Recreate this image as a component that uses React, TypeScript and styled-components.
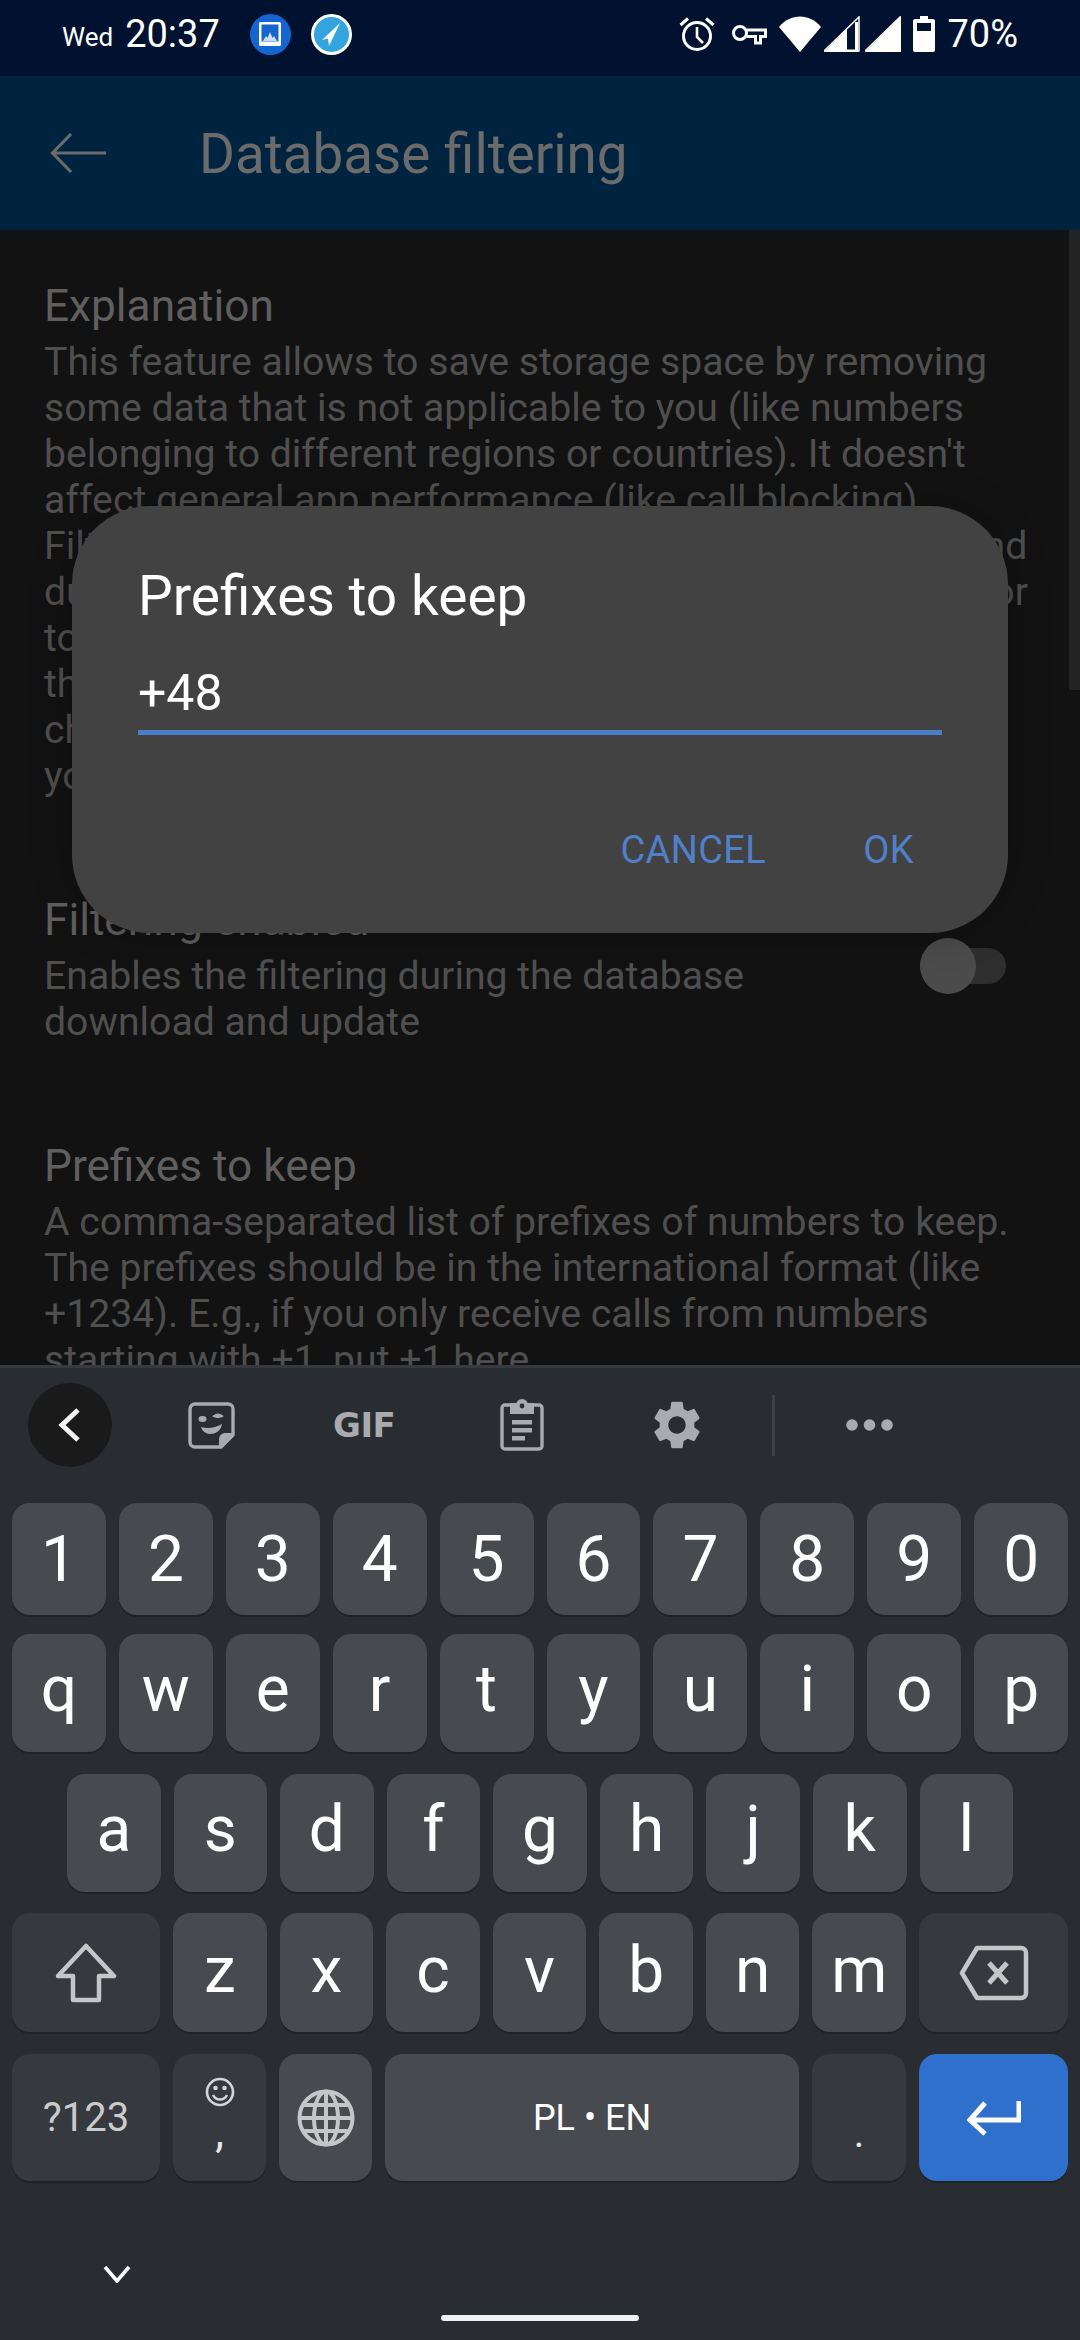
import React from "react";
import styled, { createGlobalStyle } from "styled-components";

const Global = createGlobalStyle`
  html, body { margin: 0; padding: 0; background: #121212; }
  * { box-sizing: border-box; }
`;

const Page = styled.div`
  position: relative;
  width: 1080px;
  height: 2340px;
  overflow: hidden;
  display: flex;
  flex-direction: column;
  font-family: Roboto, "Liberation Sans", sans-serif;
  background: #121212;
`;

const StatusBar = styled.div`
  height: 76px;
  flex: none;
  background: #001230;
  color: #fff;
  display: flex;
  align-items: center;
  padding: 0 62px 8px;
`;
const Day = styled.span`
  font-size: 26px;
  margin-top: 6px;
  margin-right: 12px;
`;
const Clock = styled.span`
  font-size: 38px;
  margin-right: 30px;
`;
const NoteCircle = styled.div<{ $bg: string; $ring?: boolean }>`
  width: 41px;
  height: 41px;
  border-radius: 50%;
  margin-right: 20px;
  background: ${(p) => p.$bg};
  border: ${(p) => (p.$ring ? "3px solid #fff" : "none")};
  display: flex;
  align-items: center;
  justify-content: center;
`;
const StatusRight = styled.div`
  margin-left: auto;
  display: flex;
  align-items: center;
`;
const Spacer = styled.span<{ $w: number }>`
  width: ${(p) => p.$w}px;
  flex: none;
`;
const Percent = styled.span`
  font-size: 38px;
  margin-left: 12px;
`;

const AppBar = styled.div`
  height: 154px;
  flex: none;
  background: #002440;
  display: flex;
  align-items: center;
  padding-left: 50px;
`;
const AppTitle = styled.div`
  margin-left: 93px;
  margin-top: 2px;
  font-size: 54.8px;
  color: #6b6b6b;
`;

const Content = styled.div`
  flex: 1;
  min-height: 0;
  overflow: hidden;
  padding: 48px 0 0 44px;
  background: #121212;
`;
const SectionRow = styled.div`
  display: flex;
  align-items: center;
  justify-content: space-between;
  padding-right: 74px;
  margin-top: 93px;
`;
const Title = styled.div<{ $gap?: number }>`
  font-size: 44.2px;
  line-height: 56px;
  color: #5f5f5f;
  white-space: nowrap;
  margin-top: ${(p) => p.$gap ?? 0}px;
`;
const Body = styled.div`
  font-size: 39.2px;
  line-height: 46px;
  color: #4f4f4f;
  margin-top: 5px;
  white-space: pre;
`;
const Track = styled.div`
  position: relative;
  width: 86px;
  height: 36px;
  border-radius: 18px;
  background: #2e2e2e;
  margin-top: -6px;
`;
const Thumb = styled.div`
  position: absolute;
  left: 0;
  top: -10px;
  width: 56px;
  height: 56px;
  border-radius: 50%;
  background: #4b4b4b;
`;
const ScrollThumb = styled.div`
  position: absolute;
  top: 230px;
  right: 0;
  width: 11px;
  height: 460px;
  background: #232323;
`;

const Dialog = styled.div`
  position: absolute;
  left: 72px;
  top: 506px;
  width: 936px;
  height: 427px;
  border-radius: 78px;
  background: #424242;
  padding: 58px 66px 0;
  display: flex;
  flex-direction: column;
  box-shadow: 0 0 40px rgba(0, 0, 0, 0.25);
`;
const DialogTitle = styled.div`
  font-size: 55px;
  line-height: 64px;
  color: #fff;
`;
const DialogInput = styled.div`
  margin-top: 34px;
  height: 73px;
  font-size: 50px;
  line-height: 62px;
  color: #fff;
  border-bottom: 5px solid #4a7ec9;
`;
const DialogActions = styled.div`
  display: flex;
  justify-content: flex-end;
  gap: 97px;
  margin-top: 92px;
  padding-right: 28px;
`;
const DialogAction = styled.div`
  font-size: 38px;
  line-height: 46px;
  letter-spacing: 0.4px;
  color: #4f80c9;
`;

const Keyboard = styled.div`
  height: 975px;
  flex: none;
  background: #292d32;
  border-top: 3px solid #363a3f;
  display: flex;
  flex-direction: column;
`;
const Toolbar = styled.div`
  height: 135px;
  flex: none;
  display: flex;
  align-items: center;
  padding: 0 0 21px 28px;
`;
const BackCircle = styled.div`
  width: 84px;
  height: 84px;
  border-radius: 50%;
  background: #1a1a1b;
  display: flex;
  align-items: center;
  justify-content: center;
  margin-right: 76px;
`;
const ToolSlot = styled.div<{ $w: number }>`
  width: ${(p) => p.$w}px;
  flex: none;
  display: flex;
  align-items: center;
`;
const GifLabel = styled.span`
  font-family: "DejaVu Sans", sans-serif;
  font-weight: 700;
  font-size: 34px;
  line-height: 40px;
  color: #a9abae;
  letter-spacing: -0.5px;
`;
const ToolDivider = styled.div`
  width: 3px;
  height: 61px;
  background: #3d4146;
  margin-right: 71px;
`;
const Keys = styled.div`
  display: flex;
  flex-direction: column;
  padding: 0 12px;
`;
const KeyRow = styled.div<{ $h: number; $top: number; $inset?: number }>`
  height: ${(p) => p.$h}px;
  margin-top: ${(p) => p.$top}px;
  padding: 0 ${(p) => p.$inset ?? 0}px;
  display: flex;
  gap: 13px;
`;
const Key = styled.div<{ $kind?: "dark" | "accent"; $grow?: number; $w?: number; $lift?: number }>`
  flex: ${(p) => (p.$w ? `0 0 ${p.$w}px` : `${p.$grow ?? 1} 1 0`)};
  min-width: 0;
  border-radius: 18px;
  background: ${(p) => (p.$kind === "dark" ? "#36393e" : p.$kind === "accent" ? "#2f70cc" : "#474b4f")};
  box-shadow: 0 2px 0 #1f2226;
  color: #fff;
  font-size: 64px;
  padding-bottom: ${(p) => p.$lift ?? 0}px;
  display: flex;
  align-items: center;
  justify-content: center;
`;
const SmallLabel = styled.span<{ $color?: string; $size: number }>`
  font-size: ${(p) => p.$size}px;
  color: ${(p) => p.$color ?? "#fff"};
`;
const StackKey = styled(Key)`
  flex-direction: column;
  justify-content: flex-start;
  padding-top: 23px;
  font-size: 40px;
  line-height: 40px;
`;
const Comma = styled.span`
  margin-top: 5px;
  color: #e8e8e8;
  font-size: 44px;
`;
const Period = styled(Key)`
  font-size: 40px;
  align-items: flex-end;
  padding-bottom: 24px;
  color: #e8e8e8;
`;
const NavArea = styled.div`
  flex: 1;
  display: flex;
  flex-direction: column;
`;
const ChevronSlot = styled.div`
  margin: 84px 0 0 103px;
  width: 28px;
  height: 18px;
  display: flex;
`;
const HomeBar = styled.div`
  width: 198px;
  height: 6px;
  border-radius: 3px;
  background: #f0f0f0;
  align-self: center;
  margin-top: 32px;
`;

const Alarm = () => (
  <svg width="36" height="36" viewBox="0 0 36 36" fill="none" stroke="#fff" strokeWidth="3">
    <circle cx="18" cy="20" r="13.5" />
    <path d="M18 11v10l6 6" strokeWidth="2.6" />
    <path d="M1.5 9 9 2.5M34.5 9 27 2.5" />
  </svg>
);
const KeyIcon = () => (
  <svg width="36" height="24" viewBox="0 0 36 24" fill="none" stroke="#fff" strokeWidth="3">
    <circle cx="9" cy="11" r="6.5" />
    <path d="M15.5 8H34.5V14.5H29.5V21H24.5V14.5H15.5" />
  </svg>
);
const Wifi = () => (
  <svg width="42" height="36" viewBox="0 0 42 36" fill="#fff">
    <path d="M0 11C11-3 31-3 42 11L21 36Z" />
  </svg>
);
const Signal = ({ full }: { full?: boolean }) => (
  <svg width="36" height="36" viewBox="0 0 36 36">
    <path d="M0 35 35 1V35Z" fill="none" stroke="#fff" strokeWidth="1.5" />
    <path d={full ? "M0 36 36 0V36Z" : "M0 36 23 13V36Z"} fill="#fff" />
    {!full && <path d="M32.5 6V35H23" fill="none" stroke="#fff" strokeWidth="3" />}
  </svg>
);
const Battery = () => (
  <svg width="22" height="36" viewBox="0 0 22 36" fill="#fff">
    <path d="M7 0h8v3h5a2 2 0 0 1 2 2v29a2 2 0 0 1-2 2H2a2 2 0 0 1-2-2V5a2 2 0 0 1 2-2h5Z" />
    <rect x="4" y="7" width="14" height="8" fill="#001230" />
  </svg>
);
const Gallery = () => (
  <svg width="24" height="26" viewBox="0 0 24 26">
    <rect x="1" y="1" width="22" height="24" rx="1.5" fill="#fff" />
    <rect x="3.5" y="3.5" width="17" height="17" fill="#1565d0" />
    <path d="M5 20l3-5 1.5 2L12 11l2.5 6 1.5-2 3 5Z" fill="#cfe0f6" />
  </svg>
);
const Plane = () => (
  <svg width="28" height="28" viewBox="0 0 28 28" fill="#fff">
    <path d="M23 3 5 20l6-1.5L12 26 23 3Z" />
  </svg>
);
const AppBack = () => (
  <svg width="56" height="42" viewBox="0 0 56 42" fill="none" stroke="#6b6b6b" strokeWidth="3.2">
    <path d="M56 21H3M21 2 2.5 21 21 40" />
  </svg>
);
const ToolChevron = () => (
  <svg width="24" height="34" viewBox="0 0 24 34" fill="none" stroke="#f2f2f2" strokeWidth="5">
    <path d="M20 2 4 17l16 15" />
  </svg>
);
const Sticker = () => (
  <svg width="47" height="47" viewBox="0 0 47 47" fill="none">
    <path
      d="M7 2h33a5 5 0 0 1 5 5v26L33 45H7a5 5 0 0 1-5-5V7a5 5 0 0 1 5-5Z"
      stroke="#a9abae"
      strokeWidth="3.4"
      strokeLinejoin="round"
    />
    <path d="M45 31H37a6 6 0 0 0-6 6v8Z" fill="#a9abae" />
    <ellipse cx="14.5" cy="17" rx="4" ry="3" fill="#a9abae" />
    <path d="M26 14q4-3 8 0q-4 2-8 0Z" fill="#a9abae" stroke="#a9abae" strokeWidth="2" />
    <path d="M13 25c7 2 14 1 21-3-1 7-7 10-12 10-4 0-8-3-9-7Z" fill="#a9abae" />
  </svg>
);
const Clipboard = () => (
  <svg width="44" height="52" viewBox="0 0 44 52" fill="none">
    <rect x="2" y="6" width="40" height="44" rx="3" stroke="#a9abae" strokeWidth="3.4" />
    <path d="M10 4h24v11H10Z" fill="#a9abae" />
    <circle cx="22" cy="6" r="6" fill="#a9abae" />
    <circle cx="22" cy="7" r="2.4" fill="#292d32" />
    <rect x="12" y="21" width="20" height="4.5" fill="#a9abae" />
    <rect x="12" y="29" width="20" height="4.5" fill="#a9abae" />
    <rect x="12" y="37" width="13" height="4.5" fill="#a9abae" />
  </svg>
);
const Gear = () => (
  <svg width="58" height="58" viewBox="0 0 24 24" fill="#a9abae">
    <path d="M19.14 12.94c.04-.3.06-.61.06-.94 0-.32-.02-.64-.07-.94l2.03-1.58c.18-.14.23-.41.12-.61l-1.92-3.32c-.12-.22-.37-.29-.59-.22l-2.39.96c-.5-.38-1.03-.7-1.62-.94l-.36-2.54c-.04-.24-.24-.41-.48-.41h-3.84c-.24 0-.43.17-.47.41l-.36 2.54c-.59.24-1.13.57-1.62.94l-2.39-.96c-.22-.08-.47 0-.59.22L2.74 8.87c-.12.21-.08.47.12.61l2.03 1.58c-.05.3-.09.63-.09.94s.02.64.07.94l-2.03 1.58c-.18.14-.23.41-.12.61l1.92 3.32c.12.22.37.29.59.22l2.39-.96c.5.38 1.03.7 1.62.94l.36 2.54c.05.24.24.41.48.41h3.84c.24 0 .44-.17.47-.41l.36-2.54c.59-.24 1.13-.56 1.62-.94l2.39.96c.22.08.47 0 .59-.22l1.92-3.32c.12-.22.07-.47-.12-.61l-2.01-1.58zM12 15.6c-1.98 0-3.6-1.62-3.6-3.6s1.62-3.6 3.6-3.6 3.6 1.62 3.6 3.6-1.62 3.6-3.6 3.6z" />
  </svg>
);
const Dots = () => (
  <svg width="47" height="12" viewBox="0 0 47 12" fill="#a9abae">
    <circle cx="6" cy="6" r="5.8" />
    <circle cx="23.5" cy="6" r="5.8" />
    <circle cx="41" cy="6" r="5.8" />
  </svg>
);
const Shift = () => (
  <svg width="62" height="60" viewBox="0 0 62 60" fill="none" stroke="#c4c6c8" strokeWidth="4.5" strokeLinejoin="round">
    <path d="M31 3 59 33H44V57H18V33H3Z" />
  </svg>
);
const Backspace = () => (
  <svg width="70" height="56" viewBox="0 0 70 56" fill="none" stroke="#c4c6c8" strokeWidth="4.5" strokeLinejoin="round">
    <path d="M18 3H62a5 5 0 0 1 5 5V48a5 5 0 0 1-5 5H18L3 28Z" />
    <path d="M30 18 48 38M48 18 30 38" strokeWidth="5" />
  </svg>
);
const Smiley = () => (
  <svg width="30" height="30" viewBox="0 0 30 30" fill="none" stroke="#d4d5d7" strokeWidth="2.6">
    <circle cx="15" cy="15" r="13" />
    <path d="M8 18c3 6 11 6 14 0" />
    <circle cx="10.5" cy="11" r="1" fill="#d4d5d7" />
    <circle cx="19.5" cy="11" r="1" fill="#d4d5d7" />
  </svg>
);
const Globe = () => (
  <svg width="58" height="58" viewBox="0 0 58 58" fill="none" stroke="#c4c6c8" strokeWidth="4">
    <circle cx="29" cy="29" r="26.5" />
    <ellipse cx="29" cy="29" rx="12" ry="26.5" />
    <path d="M29 2.5V55.5M6 16H52M3 29H55M6 42H52" />
  </svg>
);
const Enter = () => (
  <svg width="54" height="36" viewBox="0 0 54 36" fill="none" stroke="#fff" strokeWidth="5">
    <path d="M52 1V20H4M18 3 3 20 18 34" />
  </svg>
);
const Chevron = () => (
  <svg width="28" height="18" viewBox="0 0 28 18" fill="none" stroke="#fff" strokeWidth="3.6">
    <path d="M2 2 14 16 26 2" />
  </svg>
);

const App = () => (
  <Page>
    <Global />
    <StatusBar>
      <Day>Wed</Day>
      <Clock>20:37</Clock>
      <NoteCircle $bg="#1565d0">
        <Gallery />
      </NoteCircle>
      <NoteCircle $bg="#34a4de" $ring>
        <Plane />
      </NoteCircle>
      <StatusRight>
        <Alarm />
        <Spacer $w={16} />
        <KeyIcon />
        <Spacer $w={12} />
        <Wifi />
        <Spacer $w={3} />
        <Signal />
        <Spacer $w={5} />
        <Signal full />
        <Spacer $w={12} />
        <Battery />
        <Percent>70%</Percent>
      </StatusRight>
    </StatusBar>
    <AppBar>
      <AppBack />
      <AppTitle>Database filtering</AppTitle>
    </AppBar>
    <Content>
      <Title>Explanation</Title>
      <Body>
        {`This feature allows to save storage space by removing
some data that is not applicable to you (like numbers
belonging to different regions or countries). It doesn't
affect general app performance (like call blocking).
Filtering is applied to the database when it is loaded, and
during every update. You may clear the data, and wait for
to have the filter applied to what is stored already,
then update the database from the main settings
choose the prefixes carefully, otherwise
you may lose some of the data`}
      </Body>
      <SectionRow>
        <div>
          <Title>Filtering enabled</Title>
          <Body>
            {`Enables the filtering during the database
download and update`}
          </Body>
        </div>
        <Track>
          <Thumb />
        </Track>
      </SectionRow>
      <Title $gap={93}>Prefixes to keep</Title>
      <Body>
        {`A comma-separated list of prefixes of numbers to keep.
The prefixes should be in the international format (like
+1234). E.g., if you only receive calls from numbers
starting with +1, put +1 here.`}
      </Body>
    </Content>
    <ScrollThumb />
    <Dialog>
      <DialogTitle>Prefixes to keep</DialogTitle>
      <DialogInput>+48</DialogInput>
      <DialogActions>
        <DialogAction>CANCEL</DialogAction>
        <DialogAction>OK</DialogAction>
      </DialogActions>
    </Dialog>
    <Keyboard>
      <Toolbar>
        <BackCircle>
          <ToolChevron />
        </BackCircle>
        <ToolSlot $w={145}>
          <Sticker />
        </ToolSlot>
        <ToolSlot $w={167}>
          <GifLabel>GIF</GifLabel>
        </ToolSlot>
        <ToolSlot $w={148}>
          <Clipboard />
        </ToolSlot>
        <ToolSlot $w={124}>
          <Gear />
        </ToolSlot>
        <ToolDivider />
        <Dots />
      </Toolbar>
      <Keys>
        <KeyRow $h={112} $top={0}>
          {"1234567890".split("").map((k) => (
            <Key key={k}>{k}</Key>
          ))}
        </KeyRow>
        <KeyRow $h={118} $top={19}>
          {"qwertyuiop".split("").map((k) => (
            <Key key={k} $lift={8}>{k}</Key>
          ))}
        </KeyRow>
        <KeyRow $h={118} $top={22} $inset={55}>
          {"asdfghjkl".split("").map((k) => (
            <Key key={k} $lift={8}>{k}</Key>
          ))}
        </KeyRow>
        <KeyRow $h={119} $top={21}>
          <Key $kind="dark" $w={148}>
            <Shift />
          </Key>
          {"zxcvbnm".split("").map((k) => (
            <Key key={k} $lift={5}>{k}</Key>
          ))}
          <Key $kind="dark" $w={149}>
            <Backspace />
          </Key>
        </KeyRow>
        <KeyRow $h={127} $top={22}>
          <Key $kind="dark" $w={148}>
            <SmallLabel $size={40} $color="#c9cbcd">?123</SmallLabel>
          </Key>
          <StackKey $kind="dark" $w={93}>
            <Smiley />
            <Comma>,</Comma>
          </StackKey>
          <Key $w={93}>
            <Globe />
          </Key>
          <Key $w={414}>
            <SmallLabel $size={36}>PL • EN</SmallLabel>
          </Key>
          <Period $kind="dark" $w={94}>.</Period>
          <Key $kind="accent" $w={149}>
            <Enter />
          </Key>
        </KeyRow>
      </Keys>
      <NavArea>
        <ChevronSlot>
          <Chevron />
        </ChevronSlot>
        <HomeBar />
      </NavArea>
    </Keyboard>
  </Page>
);

export default App;
